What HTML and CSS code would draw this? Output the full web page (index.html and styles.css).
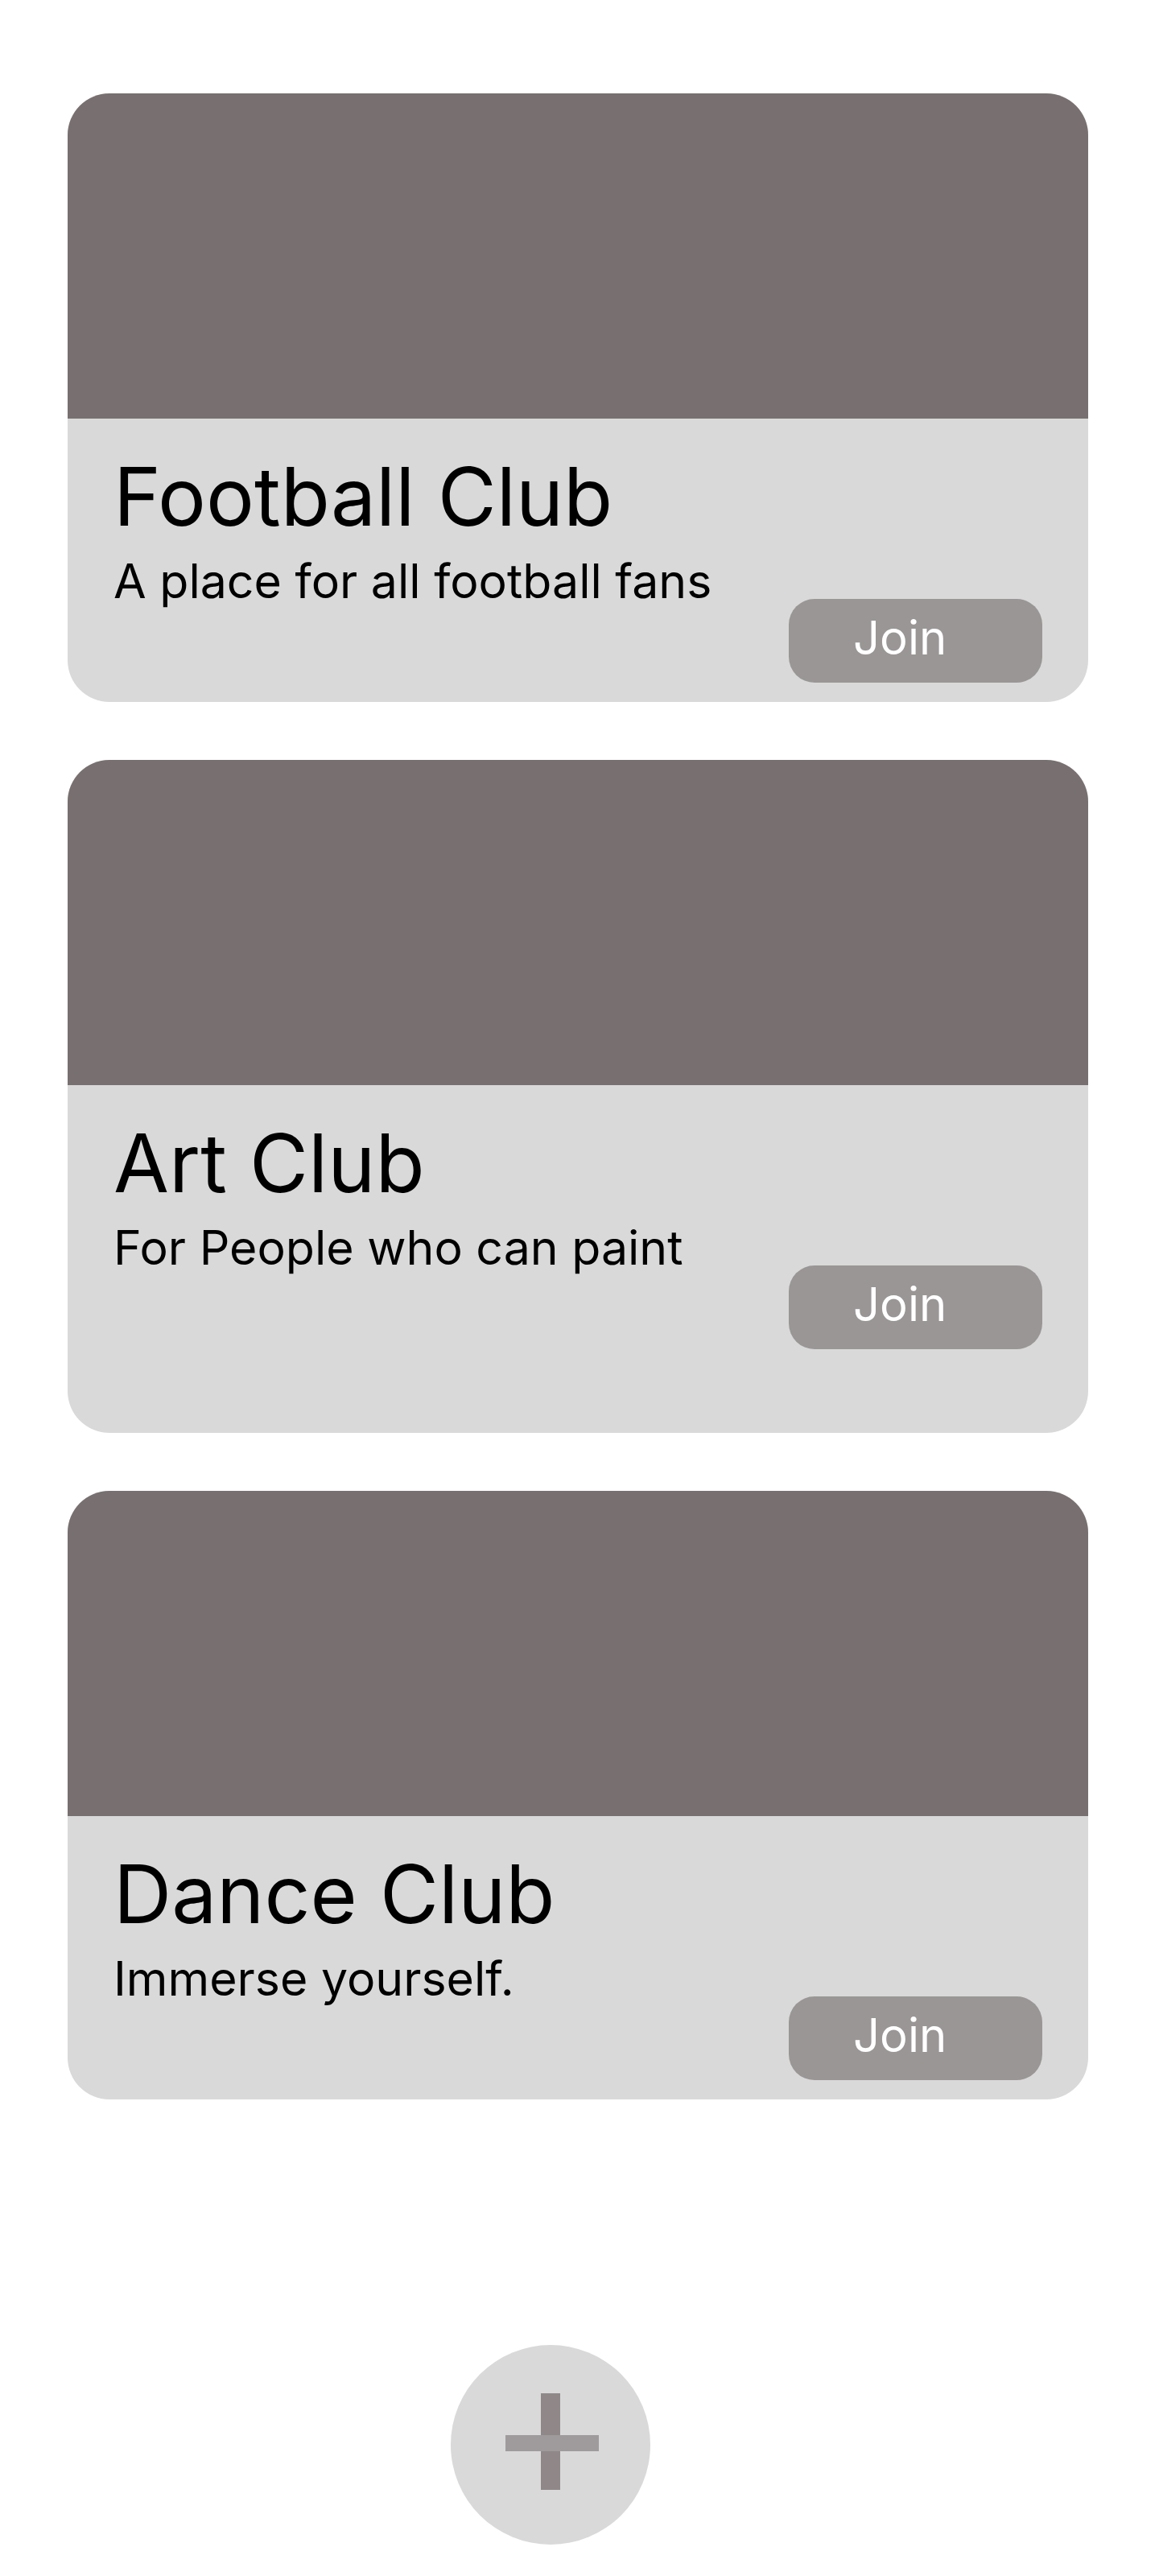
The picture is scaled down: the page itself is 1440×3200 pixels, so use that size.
FILE: index.html
```html
<!DOCTYPE html>
<html lang="en">
<head>
<meta charset="utf-8">
<title>Clubs</title>
<link rel="stylesheet" href="styles.css">
</head>
<body>
<main class="page">
  <section class="card">
    <div class="card__image"></div>
    <div class="card__body">
      <h2 class="card__title">Football Club</h2>
      <p class="card__text">A place for all football fans</p>
      <button class="card__join" type="button">Join</button>
    </div>
  </section>
  <section class="card card--tall">
    <div class="card__image"></div>
    <div class="card__body">
      <h2 class="card__title">Art Club</h2>
      <p class="card__text">For People who can paint</p>
      <button class="card__join" type="button">Join</button>
    </div>
  </section>
  <section class="card">
    <div class="card__image"></div>
    <div class="card__body">
      <h2 class="card__title">Dance Club</h2>
      <p class="card__text">Immerse yourself.</p>
      <button class="card__join" type="button">Join</button>
    </div>
  </section>
  <div class="add-row">
    <button class="add-btn" type="button" aria-label="Add club">
      <span class="add-btn__v"></span>
      <span class="add-btn__h"></span>
    </button>
  </div>
</main>
</body>
</html>
```

FILE: styles.css
```css
* { box-sizing: border-box; }
html, body { margin: 0; padding: 0; background: #ffffff; }
body { font-family: "Inter", "Liberation Sans", sans-serif; color: #000; }

.page {
  display: flex;
  flex-direction: column;
  gap: 72px;
  padding: 116px 88px 0 84px;
}

.card {
  width: 1268px;
  border-radius: 52px;
  overflow: hidden;
  background: #d9d9d9;
}

.card__image {
  height: 404px;
  background: #787070;
}

.card__body {
  display: flex;
  flex-direction: column;
  padding: 47px 57px 24px 57px;
}

.card--tall .card__body { padding-bottom: 104px; }

.card__title {
  margin: 0;
  font-size: 100px;
  line-height: 100px;
  font-weight: 400;
  letter-spacing: 0;
}

.card__text {
  margin: 25px 0 0 0;
  font-size: 59px;
  line-height: 59px;
  font-weight: 400;
}

.card__join {
  align-self: flex-end;
  margin-top: -7px;
  width: 315px;
  height: 104px;
  border: none;
  border-radius: 32px;
  background: #9a9696;
  color: #ffffff;
  font-family: "Inter", "Liberation Sans", sans-serif;
  font-size: 58px;
  line-height: 58px;
  text-align: left;
  padding: 0 0 8px 80px;
}

.add-row {
  display: flex;
  margin-top: 233px;
  padding-left: 476px;
}

.add-btn {
  position: relative;
  width: 248px;
  height: 248px;
  border-radius: 50%;
  border: none;
  background: #d9d9d9;
  padding: 0;
}

.add-btn__v {
  position: absolute;
  left: 112px;
  top: 60px;
  width: 24px;
  height: 120px;
  background: #908888;
}

.add-btn__h {
  position: absolute;
  left: 68px;
  top: 112px;
  width: 116px;
  height: 20px;
  background: #9f9b9c;
}
```
